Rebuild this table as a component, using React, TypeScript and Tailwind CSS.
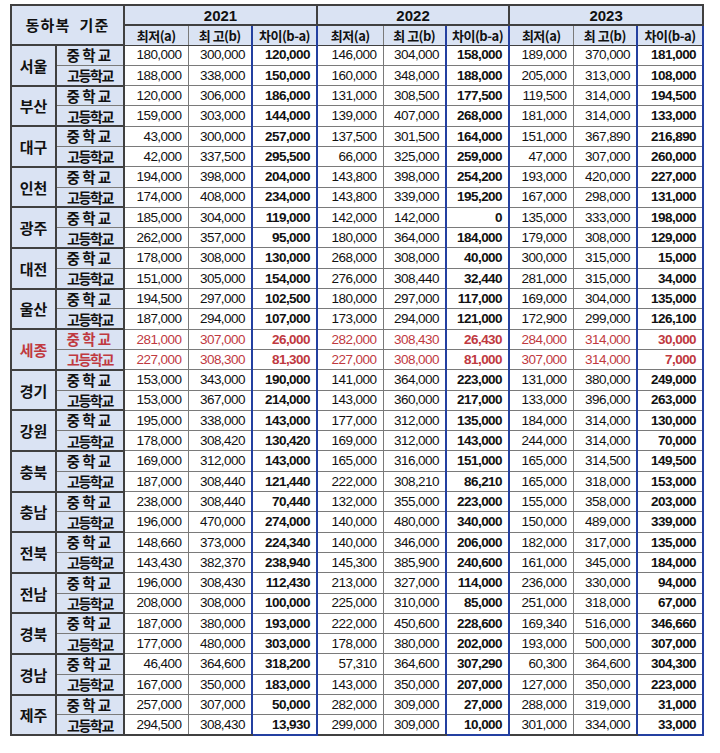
type Row = { region: string; mid: string[]; high: string[] };

const rows: Row[] = [
  { region: "서울", mid: ["180,000", "300,000", "120,000", "146,000", "304,000", "158,000", "189,000", "370,000", "181,000"], high: ["188,000", "338,000", "150,000", "160,000", "348,000", "188,000", "205,000", "313,000", "108,000"] },
  { region: "부산", mid: ["120,000", "306,000", "186,000", "131,000", "308,500", "177,500", "119,500", "314,000", "194,500"], high: ["159,000", "303,000", "144,000", "139,000", "407,000", "268,000", "181,000", "314,000", "133,000"] },
  { region: "대구", mid: ["43,000", "300,000", "257,000", "137,500", "301,500", "164,000", "151,000", "367,890", "216,890"], high: ["42,000", "337,500", "295,500", "66,000", "325,000", "259,000", "47,000", "307,000", "260,000"] },
  { region: "인천", mid: ["194,000", "398,000", "204,000", "143,800", "398,000", "254,200", "193,000", "420,000", "227,000"], high: ["174,000", "408,000", "234,000", "143,800", "339,000", "195,200", "167,000", "298,000", "131,000"] },
  { region: "광주", mid: ["185,000", "304,000", "119,000", "142,000", "142,000", "0", "135,000", "333,000", "198,000"], high: ["262,000", "357,000", "95,000", "180,000", "364,000", "184,000", "179,000", "308,000", "129,000"] },
  { region: "대전", mid: ["178,000", "308,000", "130,000", "268,000", "308,000", "40,000", "300,000", "315,000", "15,000"], high: ["151,000", "305,000", "154,000", "276,000", "308,440", "32,440", "281,000", "315,000", "34,000"] },
  { region: "울산", mid: ["194,500", "297,000", "102,500", "180,000", "297,000", "117,000", "169,000", "304,000", "135,000"], high: ["187,000", "294,000", "107,000", "173,000", "294,000", "121,000", "172,900", "299,000", "126,100"] },
  { region: "세종", mid: ["281,000", "307,000", "26,000", "282,000", "308,430", "26,430", "284,000", "314,000", "30,000"], high: ["227,000", "308,300", "81,300", "227,000", "308,000", "81,000", "307,000", "314,000", "7,000"] },
  { region: "경기", mid: ["153,000", "343,000", "190,000", "141,000", "364,000", "223,000", "131,000", "380,000", "249,000"], high: ["153,000", "367,000", "214,000", "143,000", "360,000", "217,000", "133,000", "396,000", "263,000"] },
  { region: "강원", mid: ["195,000", "338,000", "143,000", "177,000", "312,000", "135,000", "184,000", "314,000", "130,000"], high: ["178,000", "308,420", "130,420", "169,000", "312,000", "143,000", "244,000", "314,000", "70,000"] },
  { region: "충북", mid: ["169,000", "312,000", "143,000", "165,000", "316,000", "151,000", "165,000", "314,500", "149,500"], high: ["187,000", "308,440", "121,440", "222,000", "308,210", "86,210", "165,000", "318,000", "153,000"] },
  { region: "충남", mid: ["238,000", "308,440", "70,440", "132,000", "355,000", "223,000", "155,000", "358,000", "203,000"], high: ["196,000", "470,000", "274,000", "140,000", "480,000", "340,000", "150,000", "489,000", "339,000"] },
  { region: "전북", mid: ["148,660", "373,000", "224,340", "140,000", "346,000", "206,000", "182,000", "317,000", "135,000"], high: ["143,430", "382,370", "238,940", "145,300", "385,900", "240,600", "161,000", "345,000", "184,000"] },
  { region: "전남", mid: ["196,000", "308,430", "112,430", "213,000", "327,000", "114,000", "236,000", "330,000", "94,000"], high: ["208,000", "308,000", "100,000", "225,000", "310,000", "85,000", "251,000", "318,000", "67,000"] },
  { region: "경북", mid: ["187,000", "380,000", "193,000", "222,000", "450,600", "228,600", "169,340", "516,000", "346,660"], high: ["177,000", "480,000", "303,000", "178,000", "380,000", "202,000", "193,000", "500,000", "307,000"] },
  { region: "경남", mid: ["46,400", "364,600", "318,200", "57,310", "364,600", "307,290", "60,300", "364,600", "304,300"], high: ["167,000", "350,000", "183,000", "143,000", "350,000", "207,000", "127,000", "350,000", "223,000"] },
  { region: "제주", mid: ["257,000", "307,000", "50,000", "282,000", "309,000", "27,000", "288,000", "319,000", "31,000"], high: ["294,500", "308,430", "13,930", "299,000", "309,000", "10,000", "301,000", "334,000", "33,000"] },
];

const years = ["2021", "2022", "2023"];
const cols = ["w-[45px]", "w-[68px]", "w-[64px]", "w-[64px]", "w-[65px]", "w-[66px]", "w-[63px]", "w-[63px]", "w-[64px]", "w-[64px]", "w-[66px]"];

const kr = "font-['Noto_Sans_CJK_KR','Noto_Sans',sans-serif]";
const num = "font-['Liberation_Sans',Arial,sans-serif]";

function Cells({ values, red, last }: { values: string[]; red: boolean; last: boolean }) {
  return (
    <>
      {values.map((v, i) => {
        const diff = i % 3 === 2;
        return (
          <td
            key={i}
            className={
              num +
              " h-[20.3px] p-0 pr-[6px] text-right text-[13.5px] leading-none tracking-[-0.04em] bg-white " +
              (red ? "text-[#c0393f] " : "text-[#111] ") +
              (diff
                ? "font-bold border-x-2 border-y border-x-[#2440a0] border-y-[#7a7a7a] " + (last ? "border-b-2 border-b-[#2440a0]" : "")
                : "border border-[#7a7a7a] " + (last ? "border-b-2 border-b-[#404040]" : ""))
            }
          >
            {v}
          </td>
        );
      })}
    </>
  );
}

export default function App() {
  return (
    <div className="w-[720px] h-[753px] bg-white pt-[4px] pl-[10px]">
      <table className="border-collapse table-fixed border-2 border-[#404040] w-[692px]">
        <colgroup>
          {cols.map((c, i) => (
            <col key={i} className={c} />
          ))}
        </colgroup>
        <thead>
          <tr>
            <th
              colSpan={2}
              rowSpan={2}
              className={`${kr} bg-[#dae3f3] border-2 border-[#404040] text-[15px] font-bold text-[#111] tracking-[0.08em]`}
            >
              동하복&nbsp; 기준
            </th>
            {years.map((y) => (
              <th
                key={y}
                colSpan={3}
                className={`${num} h-[20px] p-0 bg-[#dae3f3] border-2 border-[#404040] text-[15px] font-bold text-[#111] leading-none`}
              >
                {y}
              </th>
            ))}
          </tr>
          <tr>
            {years.map((y) =>
              ["최저(a)", "최 고(b)", "차이(b-a)"].map((t, i) => (
                <th
                  key={y + t}
                  className={
                    kr +
                    " h-[20px] p-0 bg-[#dae3f3] text-[13px] font-bold text-[#111] leading-none tracking-[-0.04em] " +
                    (i === 2
                      ? "border-2 border-[#2440a0] border-b border-b-[#404040]"
                      : "border border-[#7a7a7a] border-b-[#404040]")
                  }
                >
                  {t}
                </th>
              ))
            )}
          </tr>
        </thead>
        <tbody>
          {rows.map((r, idx) => {
            const red = r.region === "세종";
            const last = idx === rows.length - 1;
            const labelColor = red ? "text-[#c0393f]" : "text-[#111]";
            return [
              <tr key={r.region + "m"}>
                <td
                  rowSpan={2}
                  className={`${kr} p-0 text-center bg-[#dae3f3] border-2 border-[#404040] text-[15px] font-bold leading-none ${labelColor}`}
                >
                  {r.region}
                </td>
                <td
                  className={`${kr} h-[20.3px] p-0 text-center bg-[#dae3f3] border border-[#7a7a7a] border-t-2 border-t-[#404040] border-r-2 border-r-[#404040] text-[14.5px] font-bold leading-none tracking-[0.16em] ${labelColor}`}
                >
                  중학교
                </td>
                <Cells values={r.mid} red={red} last={false} />
              </tr>,
              <tr key={r.region + "h"}>
                <td
                  className={`${kr} h-[20.3px] p-0 text-center bg-[#dae3f3] border border-[#7a7a7a] border-r-2 border-r-[#404040] text-[14px] font-bold leading-none tracking-[-0.1em] ${labelColor} ${last ? "border-b-2 border-b-[#404040]" : "border-b-[#404040]"}`}
                >
                  고등학교
                </td>
                <Cells values={r.high} red={red} last={last} />
              </tr>,
            ];
          })}
        </tbody>
      </table>
    </div>
  );
}
